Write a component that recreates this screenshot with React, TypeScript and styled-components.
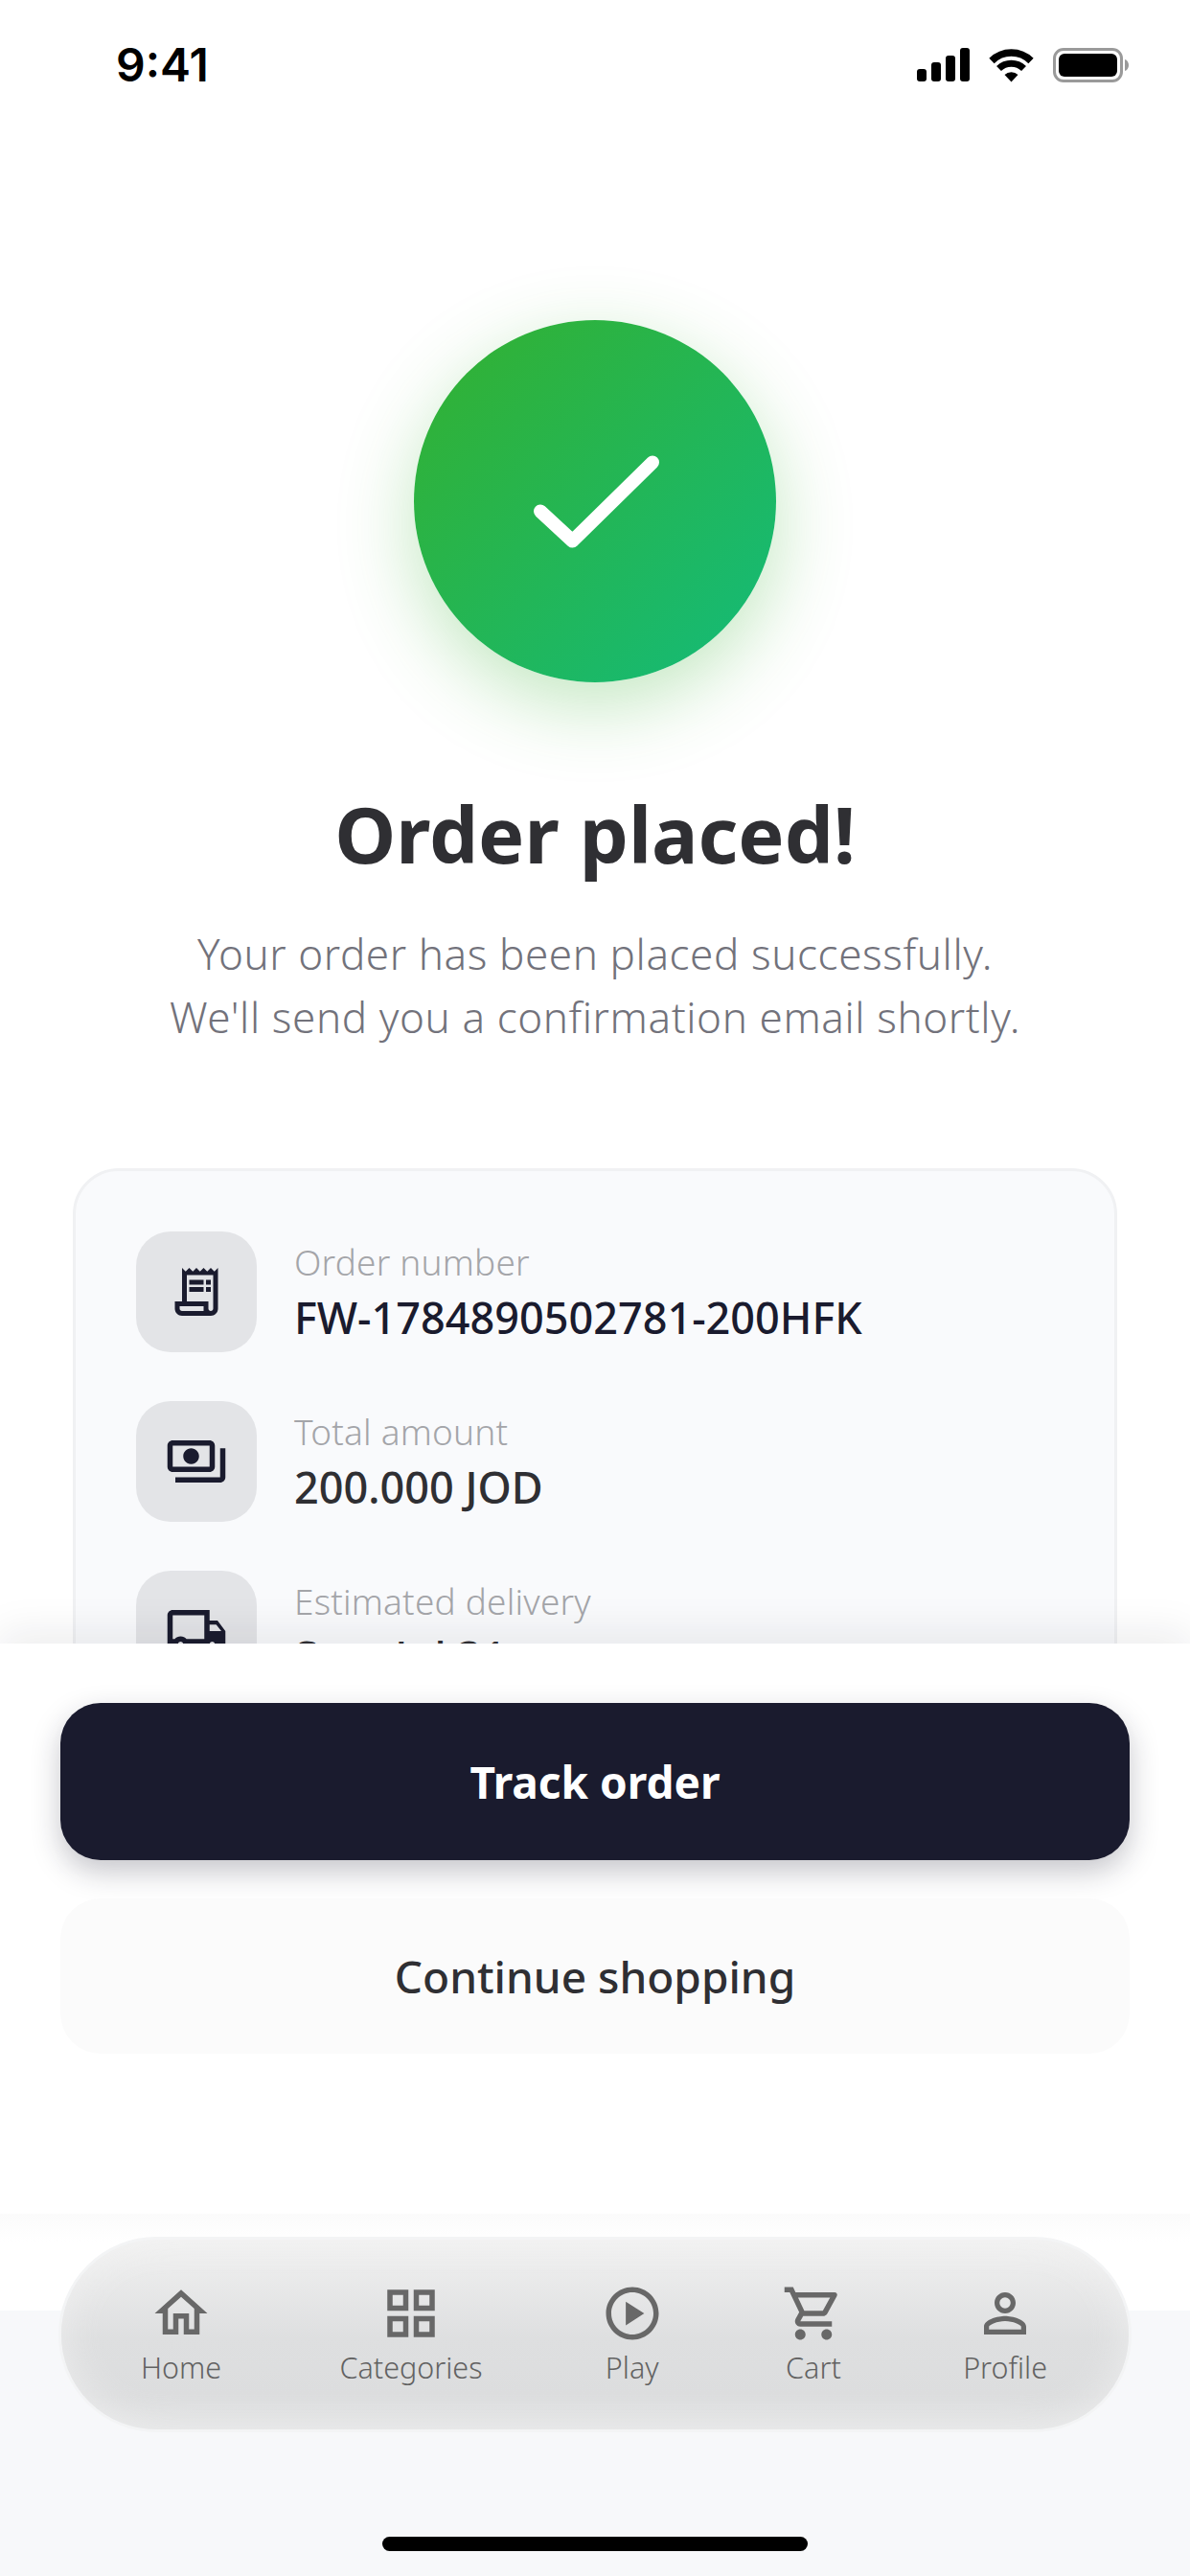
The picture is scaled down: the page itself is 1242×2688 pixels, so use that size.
import React from "react";
import styled, { createGlobalStyle } from "styled-components";
import {
  MdOutlineReceiptLong,
  MdOutlinePayments,
  MdOutlineLocalShipping,
  MdOutlineHome,
  MdOutlineGridView,
  MdOutlinePlayCircle,
  MdOutlineShoppingCart,
  MdOutlinePersonOutline,
} from "react-icons/md";

const Global = createGlobalStyle`
  html, body { margin: 0; padding: 0; background: #fff; }
  * { box-sizing: border-box; }
  body { font-family: "Noto Sans", "Open Sans", sans-serif; }
`;

const Page = styled.div`
  width: 1242px;
  height: 2688px;
  display: flex;
  flex-direction: column;
  overflow: hidden;
  background: #fff;
`;

const Scroll = styled.main`
  height: 1715px;
  flex: none;
  overflow: hidden;
  display: flex;
  flex-direction: column;
  align-items: center;
`;

const StatusBar = styled.div`
  width: 100%;
  height: 135px;
  flex: none;
  padding: 0 64px 0 121px;
  display: flex;
  justify-content: space-between;
  align-items: center;
  color: #000;
`;

const Clock = styled.span`
  font-family: Inter, "Liberation Sans", sans-serif;
  font-size: 48px;
  font-weight: 600;
`;

const StatusIcons = styled.div`
  display: flex;
  align-items: center;
  gap: 20px;
`;

const SuccessDisc = styled.div`
  width: 378px;
  height: 378px;
  margin-top: 199px;
  flex: none;
  border-radius: 50%;
  background: linear-gradient(135deg, #34b02f 0%, #13bb7a 100%);
  box-shadow: 0 24px 80px rgba(52, 176, 47, 0.3);
  display: flex;
  align-items: center;
  justify-content: center;
`;

const Title = styled.h1`
  margin: 108px 0 0;
  font-size: 81px;
  line-height: 100px;
  font-weight: 700;
  color: #2f2f33;
`;

const Subtitle = styled.p`
  margin: 42px 0 0;
  font-size: 44px;
  line-height: 66px;
  font-weight: 300;
  letter-spacing: 0.6px;
  text-align: center;
  color: #72727b;
`;

const Card = styled.section`
  width: 1090px;
  margin-top: 125px;
  flex: none;
  padding: 63px 63px;
  background: #f9fafc;
  border: 3px solid #f0f1f3;
  border-radius: 48px;
  display: flex;
  flex-direction: column;
  gap: 51px;
`;

const Row = styled.div`
  display: flex;
  align-items: center;
  gap: 39px;
`;

const IconBox = styled.div`
  width: 126px;
  height: 126px;
  flex: none;
  border-radius: 36px;
  background: #e3e4e7;
  color: #1a1b2e;
  display: flex;
  align-items: center;
  justify-content: center;
`;

const RowText = styled.div`
  display: flex;
  flex-direction: column;
  gap: 6px;
`;

const RowLabel = styled.span`
  font-size: 37px;
  line-height: 48px;
  font-weight: 300;
  letter-spacing: 0.2px;
  color: #a4a5a9;
`;

const RowValue = styled.span<{ $dark?: boolean }>`
  font-size: 45px;
  line-height: 56px;
  font-weight: 500;
  color: ${(p) => (p.$dark ? "#1a1b2e" : "#2f2f33")};
`;

const Sheet = styled.div`
  height: 696px;
  flex: none;
  padding: 62px 63px 0;
  display: flex;
  flex-direction: column;
  gap: 40px;
  position: relative;
  background: linear-gradient(to bottom, #fff 0, #fff 595px, #fbfbfb 595px, #fff 625px);
  box-shadow: 0 -12px 40px rgba(20, 22, 40, 0.08);
`;

const Button = styled.div<{ $primary?: boolean }>`
  height: ${(p) => (p.$primary ? 164 : 162)}px;
  flex: none;
  border-radius: 42px;
  display: flex;
  align-items: center;
  justify-content: center;
  font-size: 46px;
  font-weight: ${(p) => (p.$primary ? 700 : 500)};
  color: ${(p) => (p.$primary ? "#fff" : "#2f2f33")};
  background: ${(p) => (p.$primary ? "#1a1b2e" : "#fbfbfb")};
  box-shadow: ${(p) => (p.$primary ? "0 12px 30px rgba(26, 27, 46, 0.25)" : "none")};
`;

const TabArea = styled.div`
  flex: 1;
  background: #f7f8fa;
  display: flex;
  flex-direction: column;
  align-items: center;
  position: relative;
  z-index: 1;
`;

const Nav = styled.nav`
  width: 1120px;
  height: 204px;
  margin-top: -77px;
  flex: none;
  border-radius: 102px;
  border: 3px solid #f3f4f5;
  background: linear-gradient(to bottom, #f1f1f1 0%, #dedfe0 52%, #dcddde 82%, #e1e2e3 100%);
  box-shadow: inset 0 0 44px rgba(243, 243, 244, 0.7);
  display: flex;
  align-items: center;
  justify-content: space-between;
  padding: 0 85px 0 83px;
  color: #686868;
`;

const Tab = styled.div`
  display: flex;
  flex-direction: column;
  align-items: center;
  gap: 2px;
`;

const TabLabel = styled.span`
  font-size: 30.500px;
  line-height: 42px;
  font-weight: 300;
  color: #626262;
`;

const HomeIndicator = styled.div`
  width: 444px;
  height: 15px;
  margin-top: 109px;
  flex: none;
  border-radius: 8px;
  background: #000;
`;

const info = [
  { icon: <MdOutlineReceiptLong size={60} />, label: "Order number", value: "FW-1784890502781-200HFK", dark: true },
  { icon: <MdOutlinePayments size={66} />, label: "Total amount", value: "200.000 JOD" },
  { icon: <MdOutlineLocalShipping size={66} />, label: "Estimated delivery", value: "Sun, Jul 31" },
];

const tabs = [
  { icon: <MdOutlineHome size={66} />, label: "Home" },
  { icon: <MdOutlineGridView size={66} />, label: "Categories" },
  { icon: <MdOutlinePlayCircle size={66} />, label: "Play" },
  { icon: <MdOutlineShoppingCart size={66} />, label: "Cart" },
  { icon: <MdOutlinePersonOutline size={66} />, label: "Profile" },
];

export default function App() {
  return (
    <Page>
      <Global />
      <Scroll>
        <StatusBar>
          <Clock>9:41</Clock>
          <StatusIcons>
            <svg width="55" height="35" viewBox="0 0 55 35">
              <rect x="0" y="22" width="10" height="13" rx="3" />
              <rect x="15" y="15" width="10" height="20" rx="3" />
              <rect x="30" y="8" width="10" height="27" rx="3" />
              <rect x="45" y="0" width="10" height="35" rx="3" />
            </svg>
            <svg width="47" height="36" viewBox="0 0 47 36" fill="none" stroke="#000">
              <path d="M3 13.500A29 29 0 0 1 44 13.500" strokeWidth="7.500" />
              <path d="M10.500 21.500A18.500 18.500 0 0 1 36.500 21.500" strokeWidth="7" />
              <path d="M23.500 35.500L16.500 28A10 10 0 0 1 30.500 28Z" fill="#000" stroke="none" />
            </svg>
            <svg width="79" height="36" viewBox="0 0 79 36">
              <rect x="1.500" y="1.500" width="70" height="33" rx="9.500" fill="none" stroke="#9a9a9a" strokeWidth="3" />
              <rect x="6" y="6" width="61" height="24" rx="6" />
              <path d="M75 12c2.500 0.800 4 3 4 6s-1.500 5.200-4 6z" fill="#9a9a9a" />
            </svg>
          </StatusIcons>
        </StatusBar>
        <SuccessDisc>
          <svg width="150" height="120" viewBox="0 0 150 120" fill="none">
            <path d="M18 70.500 L51.500 101.500 L135 19.500" stroke="#fff" strokeWidth="14" strokeLinecap="round" strokeLinejoin="round" />
          </svg>
        </SuccessDisc>
        <Title>Order placed!</Title>
        <Subtitle>
          Your order has been placed successfully.
          <br />
          We'll send you a confirmation email shortly.
        </Subtitle>
        <Card>
          {info.map((row) => (
            <Row key={row.label}>
              <IconBox>{row.icon}</IconBox>
              <RowText>
                <RowLabel>{row.label}</RowLabel>
                <RowValue $dark={row.dark}>{row.value}</RowValue>
              </RowText>
            </Row>
          ))}
        </Card>
      </Scroll>
      <Sheet>
        <Button $primary>Track order</Button>
        <Button>Continue shopping</Button>
      </Sheet>
      <TabArea>
        <Nav>
          {tabs.map((t) => (
            <Tab key={t.label}>
              {t.icon}
              <TabLabel>{t.label}</TabLabel>
            </Tab>
          ))}
        </Nav>
        <HomeIndicator />
      </TabArea>
    </Page>
  );
}
